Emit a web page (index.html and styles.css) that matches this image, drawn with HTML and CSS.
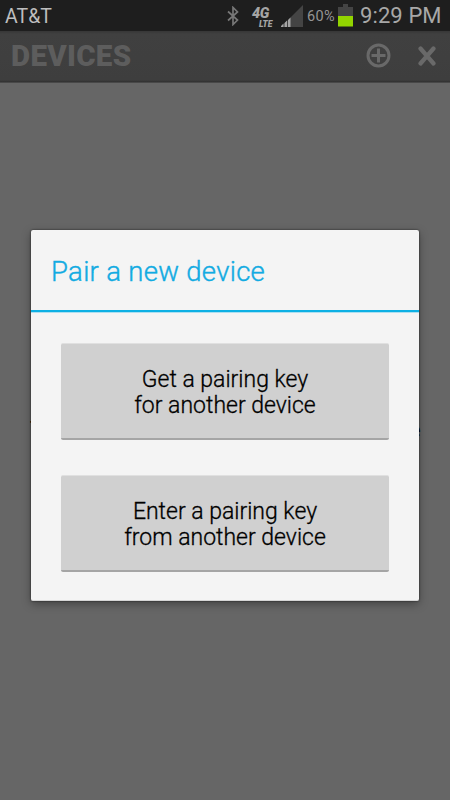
FILE: index.html
```html
<!DOCTYPE html>
<html lang="en">

<head>
    <meta charset="UTF-8">
    <meta name="viewport" content="width=device-width, initial-scale=1.0">
    <title>Devices</title>
    <link rel="stylesheet" href="styles.css">
</head>

<body>
    <div class="status-bar">
        <span class="carrier">AT&amp;T</span>
        <svg class="icon-bluetooth" width="12" height="20" viewBox="0 0 12 20">
            <path d="M1 5.5L10.5 14L6 18.5V1.5L10.5 6L1 14.5" />
        </svg>
        <div class="network">
            <span class="network-4g">4G</span>
            <span class="network-lte">LTE</span>
        </div>
        <svg class="icon-signal" width="23" height="23" viewBox="0 0 23 23">
            <path class="signal-off" d="M22 0V22H0Z" />
            <path class="signal-on" d="M0 21L2.5 18.5V22H0ZM3.5 18L6 15.5V22H3.5ZM7 15L9.5 12.5V22H7Z" />
        </svg>
        <span class="percent">60%</span>
        <svg class="icon-battery" width="15" height="23" viewBox="0 0 15 23">
            <path class="battery-off" d="M5 0H10V3H15V12H0V3H5Z" />
            <path class="battery-on" d="M0 12H15V22.5H0Z" />
        </svg>
        <span class="clock">9:29 PM</span>
    </div>

    <div class="action-bar">
        <h1>DEVICES</h1>
        <svg class="icon-add" width="25" height="25" viewBox="0 0 25 25">
            <circle cx="12.5" cy="12.5" r="10.5" />
            <path d="M12.5 5.5V19.5M5.5 12.5H19.5" />
        </svg>
        <svg class="icon-close" width="18" height="20" viewBox="0 0 18 20">
            <path d="M2.5 2.5L15.5 17.5M15.5 2.5L2.5 17.5" />
        </svg>
    </div>

    <div class="content">
        <span class="behind behind-left">.</span>
        <span class="behind behind-right">e</span>
        <div class="dialog">
            <h2>Pair a new device</h2>
            <div class="dialog-body">
                <button class="btn">Get a pairing key<br>for another device</button>
                <button class="btn">Enter a pairing key<br>from another device</button>
            </div>
        </div>
    </div>
</body>

</html>
```

FILE: styles.css
```css
* {
    box-sizing: border-box;
}

body {
    margin: 0;
    width: 450px;
    height: 800px;
    overflow: hidden;
    background-color: #666;
    font-family: Roboto, sans-serif;
    display: flex;
    flex-direction: column;
}

h1,
h2 {
    margin: 0;
}

svg {
    display: block;
    flex: none;
}

.status-bar {
    display: flex;
    align-items: flex-start;
    height: 31px;
    flex: none;
    padding-left: 5px;
    background-color: #1e1e1e;
    color: #a8a8a8;
    line-height: 32px;
    white-space: nowrap;
}

.carrier {
    width: 222px;
    font-size: 19.5px;
    color: #bebebe;
    line-height: 33px;
}

.icon-bluetooth {
    margin-top: 6px;
    fill: none;
    stroke: #777;
    stroke-width: 1.7;
}

.network {
    width: 23px;
    height: 20px;
    margin: 8px 0 0 13px;
    font-style: italic;
    font-weight: 900;
    color: #a5a5a5;
    display: flex;
    flex-direction: column;
}

.network-4g {
    font-size: 14.5px;
    line-height: 12px;
    letter-spacing: -0.4px;
}

.network-lte {
    padding-left: 7px;
    font-size: 8.5px;
    line-height: 9px;
}

.icon-signal {
    margin: 5px 0 0 6px;
}

.signal-off,
.battery-off {
    fill: #444;
}

.signal-on {
    fill: #a5a5a5;
}

.percent {
    width: 31px;
    margin-left: 3px;
    font-size: 14.5px;
    letter-spacing: 0.4px;
    line-height: 33px;
    color: #959595;
}

.icon-battery {
    margin-top: 4px;
}

.battery-on {
    fill: #93d500;
}

.clock {
    margin-left: 7px;
    font-size: 22px;
    letter-spacing: 0.1px;
}

.action-bar {
    display: flex;
    align-items: center;
    height: 52px;
    flex: none;
    padding: 0 14px 3px 11px;
    background: linear-gradient(#363636, #404040 3px, #3e3e3e 49px, #303030 51px, #606060 52px);
}

.action-bar h1 {
    flex: 1;
    font-size: 29.5px;
    font-weight: 900;
    letter-spacing: 0.3px;
    color: #5d5d5d;
}

.icon-add,
.icon-close {
    fill: none;
    stroke: #696969;
    stroke-width: 3;
}

.icon-close {
    margin-left: 27px;
    stroke-width: 4.2;
    stroke-linecap: round;
}

.content {
    position: relative;
    flex: 1;
    padding: 147px 31px 0;
}

.behind {
    position: absolute;
    color: #000;
    font-size: 20px;
    line-height: 24px;
}

.behind-left {
    left: 29px;
    top: 321px;
}

.behind-right {
    left: 410px;
    top: 335px;
}

.dialog {
    position: relative;
    width: 388px;
    height: 371px;
    background-color: #f4f4f4;
    border-bottom: 1px solid #d5d5d5;
    border-radius: 2px;
    box-shadow: 0 0 2px rgba(0, 0, 0, 0.7), 0 3px 10px rgba(0, 0, 0, 0.35);
}

.dialog h2 {
    height: 82px;
    padding-left: 20px;
    border-bottom: 2px solid #0db0e4;
    font-size: 27.5px;
    font-weight: 300;
    line-height: 83px;
    letter-spacing: 0.3px;
    color: #12abe2;
    -webkit-text-stroke: 0.4px #12abe2;
}

.dialog-body {
    display: flex;
    flex-direction: column;
    gap: 35px;
    padding: 30px 30px 0;
    border-top: 1px solid #aedff0;
}

.btn {
    height: 97px;
    padding: 3px 0 0;
    border: none;
    border-top: 1px solid #e0e0e0;
    border-bottom: 2px solid #a5a5a5;
    border-radius: 2px;
    background-color: #d0d0d0;
    font-family: Roboto, sans-serif;
    font-size: 23px;
    font-weight: 300;
    line-height: 26px;
    color: #000;
    -webkit-text-stroke: 0.3px #000;
}
```
